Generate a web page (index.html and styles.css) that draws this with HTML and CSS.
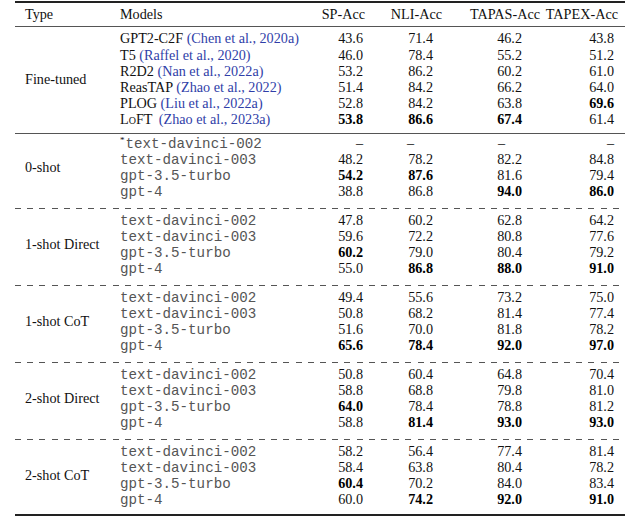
FILE: index.html
```html
<!DOCTYPE html>
<html>
<head>
<meta charset="utf-8">
<link rel="stylesheet" href="styles.css">
</head>
<body>
<div class="table">
  <div class="rule-thick"></div>
  <div class="grid head">
    <div class="type">Type</div>
    <div class="model">Models</div>
    <div class="h c-sp">SP-Acc</div>
    <div class="h c-nli">NLI-Acc</div>
    <div class="h c-tapas">TAPAS-Acc</div>
    <div class="h c-tapex">TAPEX-Acc</div>
  </div>
  <div class="rule-thin"></div>

  <div class="grid group first-group">
    <div class="type span6">Fine-tuned</div>
    <div class="model">GPT2-C2F <span class="cite">(Chen et al., 2020a)</span></div>
    <div class="n c-sp">43.6</div><div class="n c-nli">71.4</div><div class="n c-tapas">46.2</div><div class="n c-tapex">43.8</div>
    <div class="model">T5 <span class="cite">(Raffel et al., 2020)</span></div>
    <div class="n c-sp">46.0</div><div class="n c-nli">78.4</div><div class="n c-tapas">55.2</div><div class="n c-tapex">51.2</div>
    <div class="model">R2D2 <span class="cite">(Nan et al., 2022a)</span></div>
    <div class="n c-sp">53.2</div><div class="n c-nli">86.2</div><div class="n c-tapas">60.2</div><div class="n c-tapex">61.0</div>
    <div class="model">ReasTAP <span class="cite">(Zhao et al., 2022)</span></div>
    <div class="n c-sp">51.4</div><div class="n c-nli">84.2</div><div class="n c-tapas">66.2</div><div class="n c-tapex">64.0</div>
    <div class="model">PLOG <span class="cite">(Liu et al., 2022a)</span></div>
    <div class="n c-sp">52.8</div><div class="n c-nli">84.2</div><div class="n c-tapas">63.8</div><div class="n c-tapex"><b>69.6</b></div>
    <div class="model">L<span class="sc">o</span>FT <span class="cite wide">(Zhao et al., 2023a)</span></div>
    <div class="n c-sp"><b>53.8</b></div><div class="n c-nli"><b>86.6</b></div><div class="n c-tapas"><b>67.4</b></div><div class="n c-tapex">61.4</div>
  </div>
  <div class="rule-thin"></div>

  <div class="grid group g0">
    <div class="type span4">0-shot</div>
    <div class="model"><sup class="star">*</sup><span class="mono">text-davinci-002</span></div>
    <div class="n c-sp">–</div><div class="n c-nli dash-nli">–</div><div class="n c-tapas dash-tapas">–</div><div class="n c-tapex">–</div>
    <div class="model"><span class="mono">text-davinci-003</span></div>
    <div class="n c-sp">48.2</div><div class="n c-nli">78.2</div><div class="n c-tapas">82.2</div><div class="n c-tapex">84.8</div>
    <div class="model"><span class="mono">gpt-3.5-turbo</span></div>
    <div class="n c-sp"><b>54.2</b></div><div class="n c-nli"><b>87.6</b></div><div class="n c-tapas">81.6</div><div class="n c-tapex">79.4</div>
    <div class="model"><span class="mono">gpt-4</span></div>
    <div class="n c-sp">38.8</div><div class="n c-nli">86.8</div><div class="n c-tapas"><b>94.0</b></div><div class="n c-tapex"><b>86.0</b></div>
  </div>
  <div class="rule-dash"></div>

  <div class="grid group">
    <div class="type span4">1-shot Direct</div>
    <div class="model"><span class="mono">text-davinci-002</span></div>
    <div class="n c-sp">47.8</div><div class="n c-nli">60.2</div><div class="n c-tapas">62.8</div><div class="n c-tapex">64.2</div>
    <div class="model"><span class="mono">text-davinci-003</span></div>
    <div class="n c-sp">59.6</div><div class="n c-nli">72.2</div><div class="n c-tapas">80.8</div><div class="n c-tapex">77.6</div>
    <div class="model"><span class="mono">gpt-3.5-turbo</span></div>
    <div class="n c-sp"><b>60.2</b></div><div class="n c-nli">79.0</div><div class="n c-tapas">80.4</div><div class="n c-tapex">79.2</div>
    <div class="model"><span class="mono">gpt-4</span></div>
    <div class="n c-sp">55.0</div><div class="n c-nli"><b>86.8</b></div><div class="n c-tapas"><b>88.0</b></div><div class="n c-tapex"><b>91.0</b></div>
  </div>
  <div class="rule-dash"></div>

  <div class="grid group">
    <div class="type span4">1-shot CoT</div>
    <div class="model"><span class="mono">text-davinci-002</span></div>
    <div class="n c-sp">49.4</div><div class="n c-nli">55.6</div><div class="n c-tapas">73.2</div><div class="n c-tapex">75.0</div>
    <div class="model"><span class="mono">text-davinci-003</span></div>
    <div class="n c-sp">50.8</div><div class="n c-nli">68.2</div><div class="n c-tapas">81.4</div><div class="n c-tapex">77.4</div>
    <div class="model"><span class="mono">gpt-3.5-turbo</span></div>
    <div class="n c-sp">51.6</div><div class="n c-nli">70.0</div><div class="n c-tapas">81.8</div><div class="n c-tapex">78.2</div>
    <div class="model"><span class="mono">gpt-4</span></div>
    <div class="n c-sp"><b>65.6</b></div><div class="n c-nli"><b>78.4</b></div><div class="n c-tapas"><b>92.0</b></div><div class="n c-tapex"><b>97.0</b></div>
  </div>
  <div class="rule-dash"></div>

  <div class="grid group">
    <div class="type span4">2-shot Direct</div>
    <div class="model"><span class="mono">text-davinci-002</span></div>
    <div class="n c-sp">50.8</div><div class="n c-nli">60.4</div><div class="n c-tapas">64.8</div><div class="n c-tapex">70.4</div>
    <div class="model"><span class="mono">text-davinci-003</span></div>
    <div class="n c-sp">58.8</div><div class="n c-nli">68.8</div><div class="n c-tapas">79.8</div><div class="n c-tapex">81.0</div>
    <div class="model"><span class="mono">gpt-3.5-turbo</span></div>
    <div class="n c-sp"><b>64.0</b></div><div class="n c-nli">78.4</div><div class="n c-tapas">78.8</div><div class="n c-tapex">81.2</div>
    <div class="model"><span class="mono">gpt-4</span></div>
    <div class="n c-sp">58.8</div><div class="n c-nli"><b>81.4</b></div><div class="n c-tapas"><b>93.0</b></div><div class="n c-tapex"><b>93.0</b></div>
  </div>
  <div class="rule-dash"></div>

  <div class="grid group last">
    <div class="type span4">2-shot CoT</div>
    <div class="model"><span class="mono">text-davinci-002</span></div>
    <div class="n c-sp">58.2</div><div class="n c-nli">56.4</div><div class="n c-tapas">77.4</div><div class="n c-tapex">81.4</div>
    <div class="model"><span class="mono">text-davinci-003</span></div>
    <div class="n c-sp">58.4</div><div class="n c-nli">63.8</div><div class="n c-tapas">80.4</div><div class="n c-tapex">78.2</div>
    <div class="model"><span class="mono">gpt-3.5-turbo</span></div>
    <div class="n c-sp"><b>60.4</b></div><div class="n c-nli">70.2</div><div class="n c-tapas">84.0</div><div class="n c-tapex">83.4</div>
    <div class="model"><span class="mono">gpt-4</span></div>
    <div class="n c-sp">60.0</div><div class="n c-nli"><b>74.2</b></div><div class="n c-tapas"><b>92.0</b></div><div class="n c-tapex"><b>91.0</b></div>
  </div>
  <div class="rule-thick"></div>
</div>
<p class="caption">Table 2: Faithfulness-level automated evaluation results on LogicNLG. We find that gpt-4 achieves the best performance in most of the settings.</p>
</body>
</html>
```

FILE: styles.css
```css
html, body {
  margin: 0;
  padding: 0;
  background: #fff;
}

body {
  font-family: "Liberation Serif", "Times New Roman", serif;
  font-size: 14.2px;
  color: #111;
  width: 640px;
  height: 530px;
  overflow: hidden;
}

.table {
  margin-left: 15px;
  width: 610px;
  padding-top: 1px;
}

.rule-thick {
  height: 2px;
  background: #222;
}

.rule-thin {
  height: 1px;
  background: #555;
}

.rule-dash {
  height: 1px;
  background: repeating-linear-gradient(to right, #555 0 6px, transparent 6px 12.2px);
}

.grid {
  display: grid;
  grid-template-columns: 105px 195px 60px 75px 95px 80px;
  grid-auto-rows: 16.1px;
  line-height: 16.1px;
  white-space: nowrap;
}

.head {
  padding: 3.2px 0 4px;
}

.group {
  padding: 2.6px 0 9px;
}

.first-group {
  padding: 3.2px 0 5.7px;
}

.g0 {
  padding-top: 1.4px;
}

.last {
  padding-bottom: 6.2px;
}

.type {
  grid-column: 1;
  padding-left: 10px;
}

.span6 {
  grid-row: 1 / span 6;
  align-self: center;
}

.span4 {
  grid-row: 1 / span 4;
  align-self: center;
}

.model {
  grid-column: 2;
}

.n, .h {
  text-align: right;
}

.h.c-sp { padding-right: 10px; }
.h.c-nli { padding-right: 8px; }
.h.c-tapas { padding-right: 5px; }
.h.c-tapex { padding-right: 7px; }

.n.c-sp { padding-right: 12px; }
.n.c-nli { padding-right: 17px; }
.n.c-tapas { padding-right: 23px; }
.n.c-tapex { padding-right: 11px; }

.n.dash-nli { padding-right: 36px; }
.n.dash-tapas { padding-right: 40px; }

b {
  font-weight: bold;
  color: #000;
}

.cite {
  color: #2f3ea8;
}

.cite.wide {
  margin-left: 3px;
}

.sc {
  font-variant: small-caps;
}

.mono {
  font-family: "Liberation Mono", "Courier New", monospace;
  color: #555;
  line-height: 0;
}

.star {
  font-size: 9px;
  line-height: 0;
  vertical-align: 5px;
  margin-right: 1px;
}

.caption {
  margin: 12.4px 0 0 2px;
  width: 636px;
  line-height: 16px;
  color: #444;
  text-align: justify;
  text-align-last: justify;
  white-space: nowrap;
  overflow: hidden;
}
```
